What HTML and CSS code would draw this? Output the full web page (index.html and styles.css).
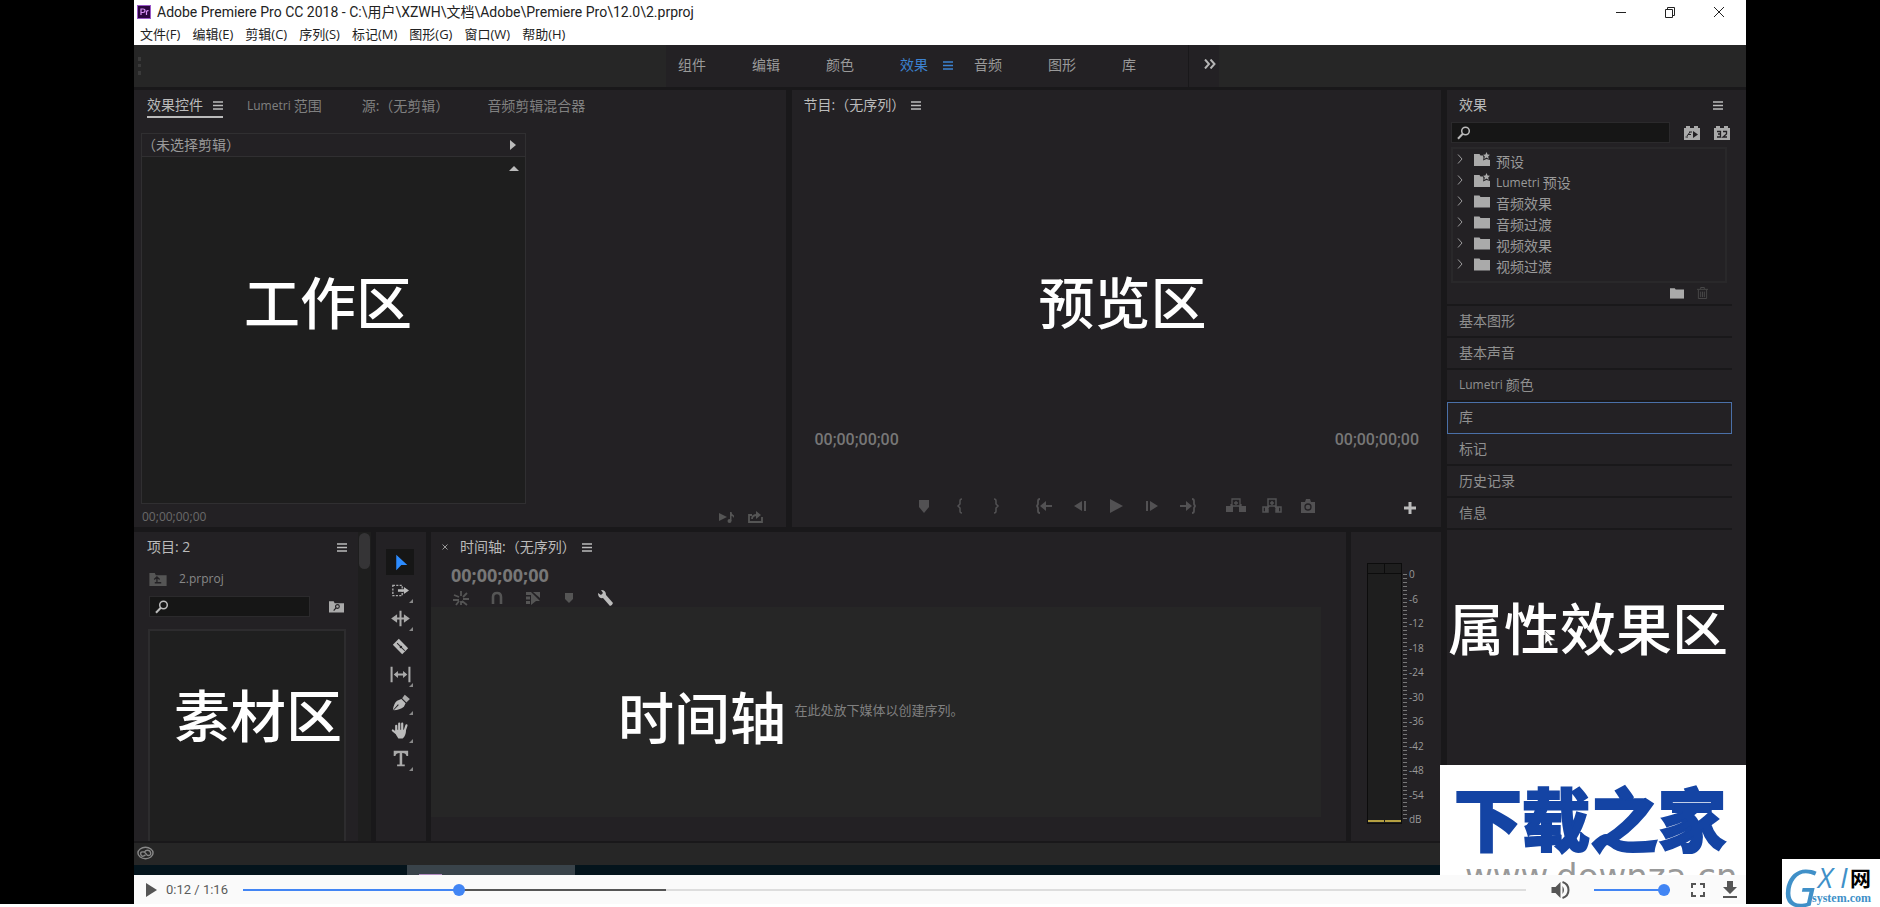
FILE: index.html
```html
<!DOCTYPE html>
<html lang="zh-CN">
<head>
<meta charset="utf-8">
<title>Adobe Premiere Pro CC 2018</title>
<link rel="stylesheet" href="styles.css">
</head>
<body>
<svg class="defs" aria-hidden="true">
  <symbol id="menu" viewBox="0 0 10 9"><path d="M0 1h10M0 4.5h10M0 8h10" stroke="currentColor" stroke-width="1.4"/></symbol>
  <symbol id="search" viewBox="0 0 14 14"><circle cx="8.500" cy="5" r="3.800" fill="none" stroke="currentColor" stroke-width="1.500"/><path d="M5.800 7.800L1 12.800" stroke="currentColor" stroke-width="2"/></symbol>
  <symbol id="folder" viewBox="0 0 16 13"><path d="M0 1h5.500l1 1.500H16V13H0z" fill="currentColor"/></symbol>
  <symbol id="preset" viewBox="0 0 16 14"><path d="M0 2h5.500l1 1.500H9L9.500 6l-.5 2.500 3.500-1.500L16 8v6H0z" fill="currentColor"/><path d="M12.500 0l1.100 2.400 2.400.3-1.800 1.700.5 2.500-2.200-1.300-2.200 1.300.5-2.500L9 2.700l2.400-.3z" fill="currentColor"/></symbol>
  <symbol id="arrow" viewBox="0 0 6 10"><path d="M1 .5L5 5 1 9.500" fill="none" stroke="currentColor"/></symbol>
</svg>

<div class="stage">
  <header class="titlebar">
    <svg class="logo" viewBox="0 0 14 14"><rect width="14" height="14" fill="#9a58c8"/><rect x="1" y="1" width="12" height="12" fill="#2c0540"/><path d="M4 10V4h2q2 0 2 1.700T6 7.500H4M9.500 10V6.500q.5-1 2-.8" fill="none" stroke="#d791f5" stroke-width="1.200"/></svg>
    <h1 class="title">Adobe Premiere Pro CC 2018 - C:\用户\XZWH\文档\Adobe\Premiere Pro\12.0\2.prproj</h1>
    <div class="window-buttons">
      <button aria-label="最小化"><svg viewBox="0 0 12 12"><path d="M1 6.500h10" stroke="#222"/></svg></button>
      <button aria-label="还原"><svg viewBox="0 0 12 12"><path d="M1.500 3.500h7v8h-7zM3.500 3V1.500h7v8H9" fill="none" stroke="#222"/></svg></button>
      <button aria-label="关闭"><svg viewBox="0 0 12 12"><path d="M1 1l10 10M11 1L1 11" stroke="#222"/></svg></button>
    </div>
  </header>
  <nav class="menubar">
    <button>文件(F)</button><button>编辑(E)</button><button>剪辑(C)</button><button>序列(S)</button><button>标记(M)</button><button>图形(G)</button><button>窗口(W)</button><button>帮助(H)</button>
  </nav>

  <nav class="workspaces">
    <span class="grip"></span>
    <div class="workspace-list">
      <button>组件</button><button>编辑</button><button>颜色</button><button class="active">效果<svg class="menu-icon"><use href="#menu"/></svg></button><button>音频</button><button>图形</button><button>库</button>
    </div>
    <button class="more" aria-label="更多"><svg viewBox="0 0 12 10"><path d="M1 .5L5 5 1 9.500M6.500 .5l4 4.500-4 4.500" fill="none" stroke="currentColor" stroke-width="2"/></svg></button>
  </nav>

  <main class="main">
    <div class="left">
      <div class="row top">
        <section class="panel controls-panel">
          <div class="tabs">
            <button class="tab active">效果控件<svg class="menu-icon"><use href="#menu"/></svg></button>
            <button class="tab lumetri"><span class="latin">Lumetri</span>范围</button>
            <button class="tab source">源:（无剪辑）</button>
            <button class="tab mixer">音频剪辑混合器</button>
          </div>
          <div class="clip-box">
            <div class="clip-head"><span>（未选择剪辑）</span><svg class="tri-right" viewBox="0 0 6 10"><path d="M0 0l6 5-6 5z" fill="#bbb"/></svg></div>
            <div class="clip-body"><svg class="tri-up" viewBox="0 0 10 5"><path d="M5 0l5 5H0z" fill="#bbb"/></svg></div>
          </div>
          <div class="clip-foot">
            <span>00;00;00;00</span>
            <svg class="foot-icon push" viewBox="0 0 15 12"><path d="M0 2l8 4-8 4zM11 1h1.500q0 2 2.500 3.500V7q-1-2-2.500-2v5H11z" fill="#555"/><circle cx="10.500" cy="10" r="2" fill="#555"/></svg>
            <svg class="foot-icon" viewBox="0 0 15 12"><path d="M4 4H1v7h13V6M4 8q0-4 5-4" fill="none" stroke="#555" stroke-width="1.800"/><path d="M8 0l5 4-5 4z" fill="#555"/></svg>
          </div>
          <p class="zone zone-work">工作区</p>
        </section>

        <section class="panel program">
          <div class="panel-title">节目:（无序列）<svg class="menu-icon"><use href="#menu"/></svg></div>
          <div class="times"><span>00;00;00;00</span><span>00;00;00;00</span></div>
          <div class="transport">
            <button aria-label="添加标记"><svg viewBox="0 0 20 16"><path d="M5 2h10v7l-5 6-5-6z" fill="currentColor"/></svg></button>
            <button aria-label="标记入点"><svg viewBox="0 0 20 16"><path d="M12 1q-2 0-2 2v3L8 8l2 2v3q0 2 2 2" fill="none" stroke="currentColor" stroke-width="1.500"/></svg></button>
            <button aria-label="标记出点"><svg viewBox="0 0 20 16"><path d="M8 1q2 0 2 2v3l2 2-2 2v3q0 2-2 2" fill="none" stroke="currentColor" stroke-width="1.500"/></svg></button>
            <button aria-label="转到入点" class="gap"><svg viewBox="0 0 20 16"><path d="M6 1Q4 1 4 3v3L3 8l1 2v3q0 2 2 2M10 8h8" fill="none" stroke="currentColor" stroke-width="1.800"/><path d="M12 3v10L6 8z" fill="currentColor"/></svg></button>
            <button aria-label="后退一帧"><svg viewBox="0 0 20 16"><path d="M12 3v10L4 8zM14 3h2v10h-2z" fill="currentColor"/></svg></button>
            <button aria-label="播放"><svg viewBox="0 0 20 16"><path d="M4 1l13 7-13 7z" fill="currentColor"/></svg></button>
            <button aria-label="前进一帧"><svg viewBox="0 0 20 16"><path d="M8 3v10l8-5zM4 3h2v10H4z" fill="currentColor"/></svg></button>
            <button aria-label="转到出点"><svg viewBox="0 0 20 16"><path d="M14 1q2 0 2 2v3l1 2-1 2v3q0 2-2 2M2 8h8" fill="none" stroke="currentColor" stroke-width="1.800"/><path d="M8 3v10l6-5z" fill="currentColor"/></svg></button>
            <button aria-label="提升" class="gap"><svg viewBox="0 0 20 16"><path d="M0 8h7v6H0zM13 8h7v6h-7z" fill="currentColor"/><path d="M6 1h8v7H6zM5 10V6M15 10V6M8 5h4M10 3v4" fill="none" stroke="currentColor" stroke-width="1.300"/></svg></button>
            <button aria-label="提取"><svg viewBox="0 0 20 16"><path d="M1 9h5v5H1zM14 9h5v5h-5zM6 1h8v7H6zM8 5h4M10 3v4M7 8l-2 4M13 8l2 4" fill="none" stroke="currentColor" stroke-width="1.500"/><path d="M3 9h3v5H3zM14 9h3v5h-3z" fill="currentColor"/></svg></button>
            <button aria-label="导出帧"><svg viewBox="0 0 20 16"><path d="M3 4h4l1-3h4l1 3h4v11H3z" fill="currentColor"/><circle cx="10" cy="9" r="3" fill="none" stroke="#232124" stroke-width="1.300"/></svg></button>
          </div>
          <button class="add" aria-label="按钮编辑器"><svg viewBox="0 0 12 12"><path d="M6 0v12M0 6h12" stroke="#bbb" stroke-width="3"/></svg></button>
          <p class="zone zone-preview">预览区</p>
        </section>
      </div>

      <div class="row bottom">
        <section class="panel project">
          <div class="project-main">
            <div class="panel-title">项目: 2<svg class="menu-icon"><use href="#menu"/></svg></div>
            <div class="project-file"><svg viewBox="0 0 16 13"><path d="M0 1h5l1 2h10v10H0z" fill="#555"/><path d="M5 10h6M7 10V5M4.500 7L7 4.500 9.500 7" fill="none" stroke="#232124" stroke-width="1.200"/></svg><span>2.prproj</span></div>
            <div class="project-search">
              <label class="search"><svg><use href="#search"/></svg><input type="text" aria-label="搜索项目"></label>
              <button aria-label="查找素材箱"><svg viewBox="0 0 16 13"><path d="M0 1h5l1 2h10v10H0z" fill="#aaa"/><circle cx="9" cy="6.500" r="2" fill="none" stroke="#232124" stroke-width="1.200"/><path d="M7.500 8L5 11" stroke="#232124" stroke-width="1.200"/></svg></button>
            </div>
            <div class="bin"></div>
          </div>
          <div class="scroll"><span></span></div>
          <p class="zone zone-media">素材区</p>
        </section>

        <section class="panel tools">
          <button class="selected" aria-label="选择工具"><svg viewBox="0 0 24 20"><path d="M7 1l13 12h-7l-6 6z" fill="#2d8cff"/></svg></button>
          <button class="sub" aria-label="向前选择轨道"><svg viewBox="0 0 24 20"><path d="M3 4h11v12H3z" fill="none" stroke="#aaa" stroke-width="1.600" stroke-dasharray="2.500 1.500"/><path d="M9 8.500h7V6l6 4-6 4v-2.500H9z" fill="#bbb"/></svg></button>
          <button class="sub" aria-label="波纹编辑"><svg viewBox="0 0 24 20"><path d="M12 1v18M5 10h14" stroke="#aaa" stroke-width="2.400"/><path d="M8 5v10l-7-5zM16 5v10l7-5z" fill="#aaa"/></svg></button>
          <button aria-label="剃刀工具"><svg viewBox="0 0 24 20"><path d="M3 8l7-7 11 11-7 7z" fill="#bbb"/><path d="M8 6l9 9" stroke="#232124" stroke-width="1.200"/><circle cx="12.500" cy="10.500" r="1.500" fill="#232124"/></svg></button>
          <button class="sub" aria-label="外滑工具"><svg viewBox="0 0 24 20"><path d="M1.500 1v18M22.500 1v18M6 10h12" stroke="#aaa" stroke-width="2.400"/><path d="M9 6v8l-5-4zM15 6v8l5-4z" fill="#aaa"/></svg></button>
          <button class="sub" aria-label="钢笔工具"><svg viewBox="0 0 24 20"><path d="M3 19q1-8 5-11l5-2 5 5-2 4q-5 4-12 4l6-6-1-1z" fill="#bbb"/><path d="M14 5l3-4 6 5-4 4z" fill="#aaa"/></svg></button>
          <button class="sub" aria-label="手形工具"><svg viewBox="0 0 24 20"><path d="M7 11V4.500M10.500 9V2M14 9V2M17 10l2-6M8 14l-5-4" stroke="#bbb" stroke-width="2.600" stroke-linecap="round"/><path d="M6 9h12.500q0 7-4 10.500h-5Q6 15 6 9z" fill="#bbb"/></svg></button>
          <button class="sub" aria-label="文字工具"><svg viewBox="0 0 24 20"><path d="M4 1h17v6h-2q-.5-3.500-5-3.500V17h3v2H8v-2h3V3.500Q6.500 3.500 6 7H4z" fill="#aaa"/></svg></button>
        </section>

        <section class="panel timeline">
          <div class="panel-title"><button class="close" aria-label="关闭时间轴"><svg viewBox="0 0 6 6"><path d="M.5.5l5 5M5.500.5l-5 5" stroke="#999"/></svg></button>时间轴:（无序列）<svg class="menu-icon"><use href="#menu"/></svg></div>
          <div class="timecode">00;00;00;00</div>
          <div class="timeline-tools">
            <button aria-label="嵌套序列"><svg viewBox="0 0 16 16"><path d="M8 1v5M1 5l5 2M0 10h6M3 15l3-4M14 3l-4 4M10 9h6M9 11l5 4M8 11v4" stroke="#555" stroke-width="1.800"/></svg></button>
            <button aria-label="对齐"><svg viewBox="0 0 16 16"><path d="M4 14V7q0-4 4-4t4 4v7" fill="none" stroke="#555" stroke-width="2.600"/></svg></button>
            <button aria-label="链接选择项"><svg viewBox="0 0 16 16"><path d="M1 2h5v3H1zM1 6.500h4v3H1zM1 11h4v3H1zM8 2h7v6zM6 2l9 9h-4l-5 4z" fill="#555"/></svg></button>
            <button aria-label="添加标记"><svg viewBox="0 0 16 16"><path d="M4 3h8v6l-4 4-4-4z" fill="#555"/></svg></button>
            <button aria-label="时间轴显示设置"><svg viewBox="0 0 16 16"><path d="M1 3l3 2 2-2-2-3q5 0 5 5l7 8q-1 3-3 3L6 8Q1 9 1 3z" fill="#bbb"/></svg></button>
          </div>
          <div class="drop">在此处放下媒体以创建序列。</div>
          <p class="zone zone-time">时间轴</p>
        </section>

        <section class="panel meters">
          <div class="meter"><div class="peaks"><i></i><i></i></div><div class="level"></div></div>
          <div class="ticks"></div>
          <div class="scale"><span>0</span><span>-6</span><span>-12</span><span>-18</span><span>-24</span><span>-30</span><span>-36</span><span>-42</span><span>-48</span><span>-54</span><span>dB</span></div>
        </section>
      </div>
    </div>

    <aside class="panel effects">
      <div class="effects-inner">
        <div class="panel-title">效果<svg class="menu-icon"><use href="#menu"/></svg></div>
        <div class="effects-search">
          <label class="search"><svg><use href="#search"/></svg><input type="text" aria-label="搜索效果"></label>
          <button aria-label="加速效果"><svg viewBox="0 0 16 14"><path d="M0 2h2V0h4v2h4V0h4v2h2v12H0z" fill="#aaa"/><path d="M9 5l5 3.500L9 12z" fill="#232124"/><path d="M3 10l3-4M1.500 11H4M5 6h3M4 8.500h3" stroke="#232124"/></svg></button>
          <button aria-label="32 位颜色"><svg viewBox="0 0 16 14"><path d="M0 2h2V0h4v2h4V0h4v2h2v12H0z" fill="#aaa"/><path d="M3 5.500h3.500v5.500H3M4 8h2.500M9 5.500h3.500V8L9 11h4" fill="none" stroke="#232124" stroke-width="1.300"/></svg></button>
        </div>
        <ul class="tree">
          <li><svg class="arrow"><use href="#arrow"/></svg><svg class="folder"><use href="#preset"/></svg>预设</li>
          <li><svg class="arrow"><use href="#arrow"/></svg><svg class="folder"><use href="#preset"/></svg><span class="latin">Lumetri</span>预设</li>
          <li><svg class="arrow"><use href="#arrow"/></svg><svg class="folder"><use href="#folder"/></svg>音频效果</li>
          <li><svg class="arrow"><use href="#arrow"/></svg><svg class="folder"><use href="#folder"/></svg>音频过渡</li>
          <li><svg class="arrow"><use href="#arrow"/></svg><svg class="folder"><use href="#folder"/></svg>视频效果</li>
          <li><svg class="arrow"><use href="#arrow"/></svg><svg class="folder"><use href="#folder"/></svg>视频过渡</li>
        </ul>
        <div class="tree-foot">
          <button aria-label="新建自定义素材箱"><svg viewBox="0 0 16 13"><use href="#folder"/></svg></button>
          <button aria-label="删除"><svg viewBox="0 0 12 13"><path d="M0 2.500h12M4 2V.5h4V2M1.500 3v9.500h9V3M4 5v6M6 5v6M8 5v6" fill="none" stroke="#4a4a4a"/></svg></button>
        </div>
        <div class="accordion">
          <button>基本图形</button><button>基本声音</button><button><span class="latin">Lumetri</span>颜色</button><button class="focus">库</button><button>标记</button><button>历史记录</button><button>信息</button>
        </div>
      </div>
      <p class="zone zone-effects">属性效果区</p>
      <svg class="cursor" viewBox="0 0 12 17"><path d="M1 1v13l3-3 2.500 5 2-1-2.500-4.500h5z" fill="#fff" stroke="#444" stroke-width=".6"/></svg>
    </aside>
  </main>

  <footer class="status"><svg viewBox="0 0 18 14"><ellipse cx="9" cy="7" rx="8" ry="6" fill="none" stroke="#888" stroke-width="1.500"/><path d="M9 9Q5 12 4 8.500T8 6l3 3.500q4 .5 3.500-2.500T11 4Q9 4 8 6" fill="none" stroke="#888" stroke-width="1.500"/></svg></footer>
  <div class="taskbar"><span><i></i></span></div>

  <div class="watermark"><strong>下载之家</strong><span>www.downza.cn</span></div>
</div>

<div class="player">
  <button aria-label="播放"><svg class="play" viewBox="0 0 11 14"><path d="M0 0l11 7-11 7z" fill="#555"/></svg></button>
  <span class="time">0:12 / 1:16</span>
  <input class="seek" type="range" min="0" max="1000" value="165" aria-label="进度">
  <button class="sound" aria-label="静音"><svg viewBox="0 0 18 18"><path d="M0 6h4l5-5v16l-5-5H0z" fill="#555"/><path d="M11 5q3 4 0 8z" fill="#555"/><path d="M11 1q6 2 6 8t-6 8" fill="none" stroke="#555" stroke-width="2"/></svg></button>
  <input class="volume" type="range" min="0" max="100" value="100" aria-label="音量">
  <button aria-label="全屏"><svg class="full" viewBox="0 0 14 14"><path d="M1 5V1h4M9 1h4v4M13 9v4H9M5 13H1V9" fill="none" stroke="#555" stroke-width="2"/></svg></button>
  <button aria-label="下载"><svg class="download" viewBox="0 0 14 18"><path d="M4 0h6v6h4l-7 7-7-7h4zM0 15h14v2H0z" fill="#555"/></svg></button>
</div>
<div class="page-end"></div>
<div class="site-mark"><span class="g">G</span><span class="xi">X I</span><span class="net">网</span><span class="domain">system.com</span></div>
</body>
</html>
```
FILE: styles.css
```css
* { box-sizing: border-box; }
body {
  margin: 0;
  height: 100vh;
  display: flex;
  flex-direction: column;
  overflow: hidden;
  background: #000;
  color: #9a9a9a;
  font: 14px/20px "Open Sans", "Noto Sans CJK SC", sans-serif;
}
button {
  display: flex;
  align-items: center;
  padding: 0;
  border: 0;
  background: none;
  color: inherit;
  font: inherit;
  white-space: nowrap;
}
svg { display: block; flex: none; }
p, h1, ul { margin: 0; padding: 0; }
.defs { position: absolute; width: 0; height: 0; }
.menu-icon { width: 10px; height: 9px; }
.latin { margin-right: 3px; font-size: 12px; }

.stage {
  position: relative;
  flex: 1;
  min-height: 0;
  margin: 0 134px;
  display: flex;
  flex-direction: column;
  overflow: hidden;
  background: #19181a;
}

/* Window chrome */
.titlebar {
  display: flex;
  align-items: center;
  height: 24px;
  padding-left: 3px;
  gap: 6px;
  background: #fff;
  color: #222;
}
.logo { width: 14px; height: 14px; }
.title { font: 400 14px/20px Roboto, "Noto Sans CJK SC", sans-serif; }
.window-buttons { display: flex; gap: 37px; margin-left: auto; padding-right: 21px; }
.window-buttons svg { width: 12px; height: 12px; }
.menubar {
  display: flex;
  gap: 12px;
  height: 21px;
  padding: 0 6px 1px;
  background: #fff;
  color: #222;
  font-size: 13px;
}
.workspaces {
  display: flex;
  align-items: stretch;
  height: 42px;
  margin-bottom: 3px;
  background: #262626;
}
.grip { width: 3px; margin: 12px 0 12px 4px; border-left: 3px dotted #3a3a3a; }
.workspace-list { display: flex; width: 522px; margin-left: 525px; padding: 0 0 2px 12px; background: #232124; }
.workspace-list button { flex: none; width: 74px; }
.workspace-list button:last-child { width: 30px; }
.workspace-list .active { color: #3c82d0; }
.workspace-list .menu-icon { margin-left: 15px; }
.more { width: 31px; padding: 0 0 4px 15px; border-left: 1px solid #19181a; background: #232124; color: #b5b5b5; }
.more svg { width: 12px; height: 10px; }

/* Panels */
.main { flex: 1; min-height: 0; display: flex; gap: 6px; }
.left { flex: 1; min-width: 0; display: flex; flex-direction: column; gap: 5px; }
.row { display: flex; min-height: 0; }
.top { flex: 437; gap: 6px; }
.bottom { flex: 309; gap: 5px; }
.panel { position: relative; min-width: 0; background: #232124; }
.panel-title { display: flex; align-items: center; height: 30px; color: #bbb; }
.zone {
  position: absolute;
  color: #fff;
  font: 500 56px/64px "Noto Sans CJK SC", sans-serif;
  white-space: nowrap;
}

.controls-panel { flex: 1 1 652px; display: flex; flex-direction: column; padding: 4px 7px 0; }
.tabs { display: flex; height: 39px; padding-left: 6px; }
.tab { height: 24px; color: #808080; }
.tab.active { gap: 10px; border-bottom: 2px solid #bbb; color: #bbb; }
.lumetri { margin-left: 24px; }
.source { margin-left: 40px; }
.mixer { margin-left: 38px; }
.clip-box { flex: 1; display: flex; flex-direction: column; width: 385px; border: 1px solid #302f31; }
.clip-head { display: flex; align-items: center; justify-content: space-between; height: 23px; padding-right: 9px; border-bottom: 1px solid #302f31; }
.clip-body { flex: 1; padding: 9px 6px; background: #1e1e1e; }
.tri-right { width: 6px; height: 10px; }
.tri-up { width: 10px; height: 5px; margin-left: auto; }
.clip-foot { display: flex; align-items: center; gap: 14px; height: 23px; padding: 3px 16px 0 1px; color: #6a6a6a; font-size: 12px; }
.foot-icon { width: 15px; height: 12px; }
.push { margin-left: auto; }
.zone-work { left: 110px; top: 178px; }

.program { flex: 1 1 650px; display: flex; flex-direction: column; }
.program .panel-title { padding-left: 12px; }
.times { display: flex; justify-content: space-between; margin-top: auto; padding: 0 22px 0 23px; color: #777; font: 500 16px/24px Roboto, sans-serif; }
.transport { display: flex; justify-content: center; gap: 16px; height: 40px; margin: 34px 0 1px; color: #525153; }
.transport svg { width: 20px; height: 16px; }
.transport .gap { margin-left: 12px; }
.add { position: absolute; right: 25px; bottom: 13px; }
.add svg { width: 12px; height: 12px; }
.zone-preview { left: 247px; top: 178px; }

.project { display: flex; width: 237px; }
.project-main { display: flex; flex-direction: column; width: 214px; margin-left: 13px; padding-right: 10px; }
.project-main .menu-icon { margin-left: auto; margin-right: 4px; }
.project-file { display: flex; align-items: center; gap: 12px; height: 34px; color: #888; font-size: 12px; }
.project-file svg { width: 18px; height: 14px; margin-left: 2px; }
.project-search { display: flex; align-items: center; justify-content: space-between; margin: 0 7px 0 2px; }
.project-search button svg { width: 15px; height: 13px; }
.search { display: flex; align-items: center; height: 21px; padding-left: 5px; border: 1px solid #2b2a2c; background: #161616; color: #bbb; }
.search svg { width: 14px; height: 14px; }
.search input { flex: 1; min-width: 0; border: 0; outline: 0; background: none; color: inherit; font: inherit; }
.project .search { width: 161px; }
.bin { flex: 1; margin: 12px 5px 0 1px; border: 2px solid #2d2c2e; border-bottom: 0; background: #1f1f1f; }
.scroll { width: 13px; margin-left: -3px; padding: 1px; background: #1e1e1e; }
.scroll span { display: block; height: 36px; border-radius: 6px; background: #353436; }
.zone-media { left: 40px; top: 149px; }

.tools { display: flex; flex-direction: column; align-items: center; gap: 2px; width: 50px; padding: 17px 2px 0 0; }
.tools button { position: relative; justify-content: center; width: 28px; height: 26px; }
.tools svg { width: 21px; height: 17px; }
.tools .selected { background: #161616; }
.sub::after { content: ""; position: absolute; right: 1px; bottom: 0; border-left: 4px solid transparent; border-bottom: 4px solid #888; }

.timeline { flex: 1; display: flex; flex-direction: column; padding-bottom: 24px; }
.timeline .panel-title { padding-left: 11px; }
.close { margin-right: 12px; }
.close svg { width: 6px; height: 6px; }
.timeline .menu-icon, .program .menu-icon { margin-left: 6px; }
.timecode { padding-left: 20px; color: #777; font: 700 18px/26px "Open Sans", sans-serif; }
.timeline-tools { display: flex; gap: 20px; height: 19px; padding-left: 22px; }
.timeline-tools svg { width: 16px; height: 16px; }
.drop { flex: 1; display: flex; align-items: center; justify-content: center; margin-right: 25px; padding: 0 0 4px 6px; background: #262626; color: #808080; font-size: 13px; }
.zone-time { left: 187px; top: 151px; }

.meters { display: flex; width: 90px; padding: 31px 0 17px 16px; }
.meter { display: flex; flex-direction: column; width: 35px; border: 1px solid #0c0c0c; background: #1e1e1e; }
.peaks { display: flex; height: 10px; border-bottom: 1px solid #0c0c0c; }
.peaks i { flex: 1; }
.peaks i + i { border-left: 1px solid #0c0c0c; }
.level { margin: auto 0 1px; height: 2px; background: linear-gradient(90deg, #b5a042 47%, #1e1e1e 47% 51%, #b5a042 51%); }
.ticks { width: 4px; margin: 11px 0 2px 1px; background: repeating-linear-gradient(#777 0 1px, transparent 1px 4px); }
.scale { display: flex; flex-direction: column; justify-content: space-between; margin: 5px 0 -1px 2px; font-size: 10px; line-height: 12px; }

.effects { width: 299px; }
.effects-inner { width: 285px; }
.effects .panel-title { padding: 0 9px 0 12px; }
.effects .panel-title .menu-icon { margin-left: auto; }
.effects-search { display: flex; align-items: center; padding: 2px 2px 0 4px; }
.effects-search .search { flex: 1; }
.effects-search button { margin-left: 14px; }
.effects-search button svg { width: 16px; height: 14px; }
.tree { height: 136px; margin: 4px 5px 0 4px; padding: 2px 0; border: 2px solid #29282a; list-style: none; }
.tree li { display: flex; align-items: center; height: 21px; padding-left: 4px; }
.arrow { width: 6px; height: 10px; margin-bottom: 5px; }
.folder { width: 16px; height: 14px; margin: 0 6px 5px 11px; color: #aaa; }
.tree-foot { display: flex; justify-content: flex-end; gap: 13px; height: 21px; padding: 0 24px 2px 0; color: #aaa; }
.tree-foot button:first-child svg { width: 14px; height: 12px; }
.tree-foot button:last-child svg { width: 11px; height: 12px; }
.accordion { border-top: 2px solid #19181a; }
.accordion button { width: 100%; height: 32px; padding-left: 12px; border-bottom: 2px solid #19181a; color: #909090; }
.accordion .focus { border: 1px solid #4a70a8; padding: 0 0 2px 11px; }
.zone-effects { left: 1px; top: 504px; }
.cursor { position: absolute; left: 97px; top: 540px; width: 12px; height: 17px; }

.status { height: 22px; margin-top: 2px; padding: 3px; background: #262626; }
.status svg { width: 17px; height: 14px; }
.taskbar { height: 10px; padding-left: 273px; background: #04141c; }
.taskbar span { display: flex; align-items: flex-end; width: 168px; height: 100%; padding-left: 12px; background: #39434a; }
.taskbar i { width: 23px; height: 1px; background: #b08ac0; }

.watermark {
  position: absolute;
  right: 0;
  bottom: 0;
  width: 306px;
  height: 110px;
  padding: 16px 0 0 14px;
  overflow: hidden;
  background: #fff;
  color: #1444a4;
}
.watermark strong { display: block; font: 900 68px/72px "Noto Sans CJK SC", sans-serif; white-space: nowrap; -webkit-text-stroke: 2px #1444a4; }
.watermark span { display: block; padding-left: 11px; color: #999; font: 34px/46px "DejaVu Sans", sans-serif; }

/* Video player bar */
.player {
  display: flex;
  align-items: center;
  height: 29px;
  margin: 0 134px;
  padding: 0 9px 0 12px;
  background: #fafafa;
  color: #5a5a5a;
}
.play { width: 11px; height: 14px; }
.time { margin: 0 15px 0 9px; font: 13px/20px Roboto, sans-serif; }
.player input { appearance: none; height: 12px; margin: 0; background: none; }
.player input::-webkit-slider-runnable-track { height: 2px; background: #4285f4; }
.player input::-webkit-slider-thumb { appearance: none; width: 12px; height: 12px; margin-top: -5px; border-radius: 50%; background: #4285f4; }
.seek { flex: 1; min-width: 0; }
.player .seek::-webkit-slider-runnable-track { background: linear-gradient(90deg, #4285f4 17%, #555 17% 33%, #ddd 33%); }
.sound { margin: 0 24px 0 25px; }
.sound svg { width: 19px; height: 18px; }
.volume { width: 76px; }
.full { width: 14px; height: 14px; margin: 0 18px 0 21px; }
.download { width: 14px; height: 18px; }
.page-end { height: 3px; background: #fff; }

.site-mark {
  position: absolute;
  right: 0;
  bottom: 0;
  width: 98px;
  height: 48px;
  overflow: hidden;
  background: #fff;
  color: #4090c8;
}
.site-mark span { position: absolute; white-space: nowrap; }
.g { left: 0; top: 5px; font: italic 52px/46px "Open Sans", sans-serif; }
.xi { left: 36px; top: 4px; font: italic 28px/28px "Open Sans", sans-serif; }
.net { left: 68px; top: 4px; color: #000; font: 700 21px/28px "Noto Sans CJK SC", sans-serif; }
.domain { left: 30px; top: 31px; font: 700 12px/16px "Liberation Serif", serif; }
```
